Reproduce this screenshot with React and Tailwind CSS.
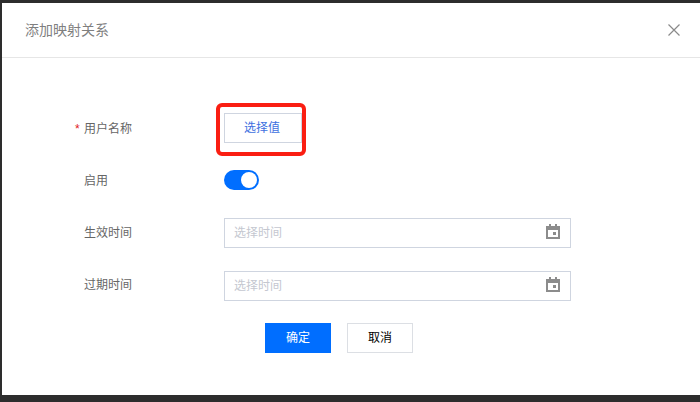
import React from "react";

function CalendarIcon({ className }) {
  return (
    <svg width="14" height="15" viewBox="0 0 14 15" className={"shrink-0 " + className} fill="#8c8c8c">
      <rect x="3" y="0" width="2" height="2" />
      <rect x="9" y="0" width="2" height="2" />
      <path fillRule="evenodd" d="M0 2h14v13H0V2zm2 4v7h10V6H2z" />
      <rect x="7" y="8" width="3" height="3" />
    </svg>
  );
}

function Row({ label, required, className, labelClass, children }) {
  return (
    <div className={"flex items-center h-[30px] " + (className || "")}>
      <div className={"w-[139px] pl-[84px] shrink-0 relative text-xs text-[#666666] leading-[30px] " + (labelClass || "")}>
        {required && <span className="absolute left-[75px] top-0 text-[#e01b1b]">*</span>}
        {label}
      </div>
      {children}
    </div>
  );
}

function DateInput({ iconClass }) {
  return (
    <div className="w-[347px] h-[30px] border border-[#cfd5e0] flex items-center justify-between pl-[9px] pr-[10px]">
      <span className="text-xs text-[#c4c7d0]">选择时间</span>
      <CalendarIcon className={iconClass} />
    </div>
  );
}

export default function App() {
  return (
    <div className="w-[700px] h-[402px] bg-[#2d2d2d] pt-[3px] pl-[2px] pb-[7px] font-['Liberation_Sans','Noto_Sans_CJK_SC',sans-serif] overflow-hidden">
      <div className="bg-white h-[392px] flex flex-col">
        <div className="h-[55px] border-b border-[#e6e6e6] flex items-center justify-between pl-[23px] pr-[20px] shrink-0">
          <span className="text-sm text-[#7f7f7f]">添加映射关系</span>
          <svg width="12" height="12" viewBox="0 0 12 12" fill="none" stroke="#8a8a8a" strokeWidth="1.2">
            <path d="M0.5 0.5L11.5 11.5M11.5 0.5L0.5 11.5" />
          </svg>
        </div>
        <div className="pt-[55px] -ml-[2px] flex flex-col">
          <Row label="用户名称" required labelClass="mt-[2px]">
            <div className="relative ml-[85px]">
              <button className="w-[78px] h-[30px] border border-[#cfd5e0] bg-white text-xs text-[#3d6fe0] flex items-center justify-center pr-[2px]">
                选择值
              </button>
              <div className="absolute left-[-8px] top-[-10px] w-[90px] h-[53px] border-[4px] border-[#fa1e12] rounded-[6px]" />
            </div>
          </Row>
          <Row label="启用" className="mt-[22px]" labelClass="mt-[2px]">
            <div className="ml-[85px] w-[35px] h-[20px] rounded-full bg-[#006eff] flex items-center justify-end pr-[2px]">
              <div className="w-[16px] h-[16px] rounded-full bg-white" />
            </div>
          </Row>
          <Row label="生效时间" className="mt-[23px]">
            <div className="ml-[85px]"><DateInput iconClass="mb-[3px]" /></div>
          </Row>
          <Row label="过期时间" className="mt-[23px]" labelClass="mb-[2px]">
            <div className="ml-[85px]"><DateInput iconClass="mb-[4px]" /></div>
          </Row>
          <div className="flex mt-[22px] pl-[265px] gap-[16px]">
            <button className="w-[66px] h-[30px] bg-[#006eff] text-white text-xs flex items-center justify-center">确定</button>
            <button className="w-[66px] h-[30px] bg-white border border-[#dcdfe4] text-black text-xs flex items-center justify-center">取消</button>
          </div>
        </div>
      </div>
    </div>
  );
}
